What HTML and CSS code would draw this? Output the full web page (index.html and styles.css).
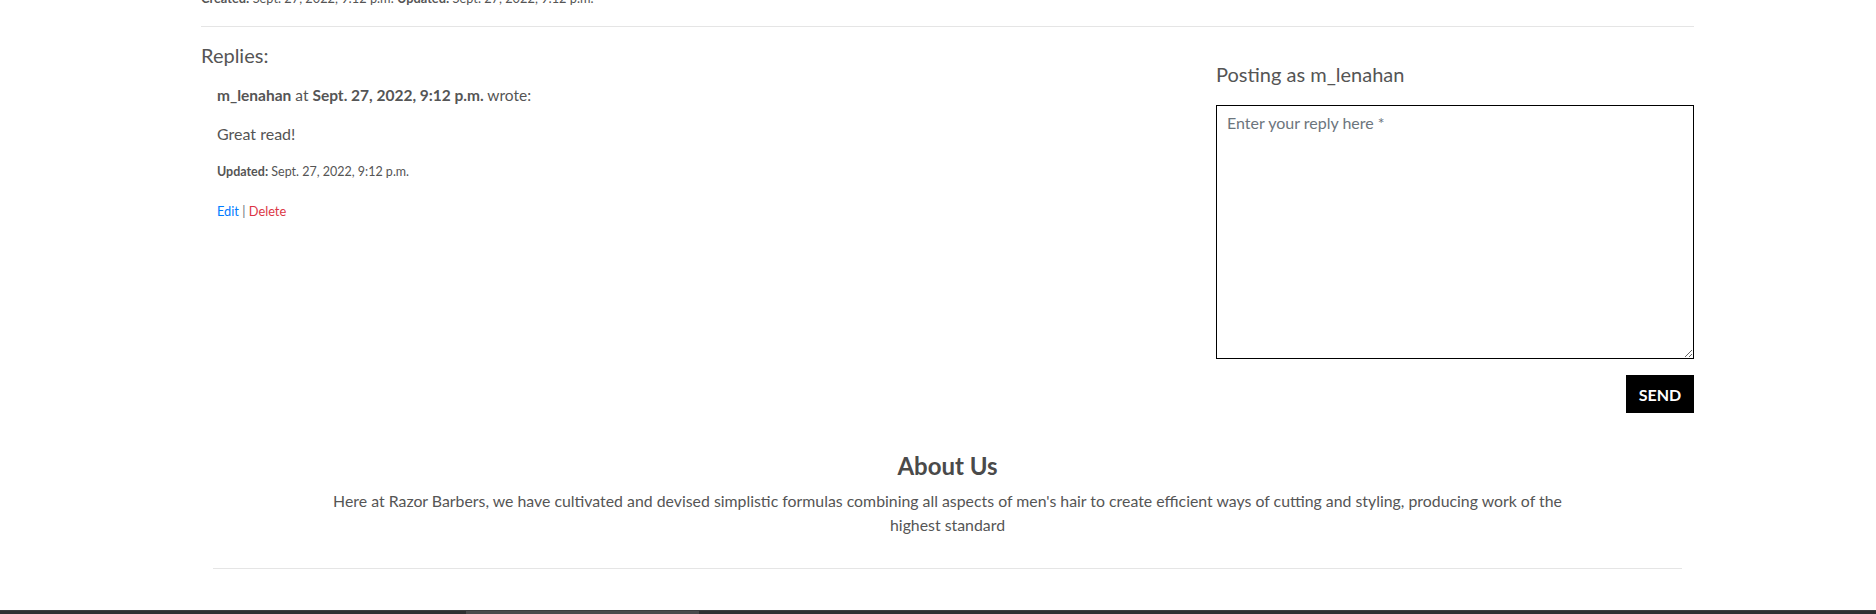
FILE: index.html
```html
<!DOCTYPE html>
<html lang="en">
<head>
<meta charset="utf-8">
<title>Post replies</title>
<link rel="stylesheet" href="styles.css">
</head>
<body>
<main class="page">
  <p class="post-meta"><strong>Created:</strong> Sept. 27, 2022, 9:12 p.m. <strong>Updated:</strong> Sept. 27, 2022, 9:12 p.m.</p>
  <hr class="rule">
  <div class="comments-row">
    <section class="replies">
      <h4 class="replies-title">Replies:</h4>
      <article class="reply">
        <p class="reply-head"><strong>m_lenahan</strong> at <strong>Sept. 27, 2022, 9:12 p.m.</strong> wrote:</p>
        <p class="reply-body">Great read!</p>
        <p class="reply-meta"><strong>Updated:</strong> Sept. 27, 2022, 9:12 p.m.</p>
        <p class="reply-actions"><a class="edit" href="#">Edit</a> <span class="sep">|</span> <a class="delete" href="#">Delete</a></p>
      </article>
    </section>
    <section class="reply-form">
      <h4 class="posting-as">Posting as m_lenahan</h4>
      <textarea class="reply-input" placeholder="Enter your reply here *"></textarea>
      <div class="form-actions">
        <button class="send-btn" type="button">SEND</button>
      </div>
    </section>
  </div>
  <section class="about">
    <h3 class="about-title">About Us</h3>
    <p class="about-text">Here at Razor Barbers, we have cultivated and devised simplistic formulas combining all aspects of men's hair to create efficient ways of cutting and styling, producing work of the highest standard</p>
    <hr class="about-rule">
  </section>
</main>
<div class="footer-strip"><div class="footer-thumb"></div></div>
</body>
</html>
```

FILE: styles.css
```css
html, body {
  margin: 0;
  padding: 0;
  overflow: hidden;
}
body {
  font-family: Lato, "Open Sans", "Liberation Sans", sans-serif;
  font-size: 16px;
  line-height: 1.5;
  color: #555;
  background: #fff;
  height: 614px;
  display: flex;
  flex-direction: column;
}
.page {
  width: 1493px;
  margin-left: 201px;
  flex: 1;
}
.post-meta {
  font-size: 12.8px;
  margin: -11px 0 18px;
}
.rule {
  margin: 0;
  border: 0;
  border-top: 1px solid rgba(0, 0, 0, 0.1);
}
.comments-row {
  display: grid;
  grid-template-columns: 1fr 478px;
  column-gap: 30px;
}
.replies-title {
  font-size: 20px;
  font-weight: 400;
  line-height: 1.2;
  margin: 16px 0 0;
}
.reply {
  padding-left: 16px;
}
.reply-head {
  font-size: 15.5px;
  line-height: 24px;
  margin: 16px 0 0;
}
.reply-body {
  margin: 15px 0 0;
}
.reply-meta {
  font-size: 12.5px;
  margin: 17px 0 0;
}
.reply-actions {
  font-size: 12.8px;
  margin: 20px 0 0;
}
.reply-actions a { text-decoration: none; }
.edit { color: #007bff; }
.delete { color: #dc3545; }
.sep { color: #6c757d; }
.reply-form {
  display: flex;
  flex-direction: column;
}
.posting-as {
  font-size: 20px;
  font-weight: 400;
  line-height: 1.2;
  margin: 35px 0 0;
}
.reply-input {
  margin-top: 19px;
  height: 254px;
  box-sizing: border-box;
  border: 1px solid #000;
  border-radius: 0;
  padding: 5px 10px;
  font-family: Lato, "Open Sans", sans-serif;
  font-size: 16px;
  line-height: 1.5;
  color: #495057;
}
.reply-input::placeholder {
  color: #6c757d;
}
.form-actions {
  display: flex;
  justify-content: flex-end;
  margin-top: 16px;
}
.send-btn {
  width: 68px;
  height: 38px;
  border: 0;
  border-radius: 0;
  background: #000;
  color: #fff;
  font-family: Lato, "Open Sans", sans-serif;
  font-weight: 700;
  font-size: 16px;
  padding: 0;
}
.about {
  text-align: center;
}
.about-title {
  font-size: 24px;
  font-weight: 700;
  line-height: 1.2;
  color: #4a4a4a;
  margin: 39px 0 0;
}
.about-text {
  width: 1260px;
  font-size: 15.85px;
  line-height: 24px;
  margin: 8px auto 0;
}
.about-rule {
  margin: 31px 12px 0;
  border: 0;
  border-top: 1px solid rgba(0, 0, 0, 0.1);
}
.footer-strip {
  height: 4px;
  background: #2f2f31;
  border-top: 1px solid #3c3c3e;
  box-sizing: border-box;
  position: relative;
}
.footer-thumb {
  position: absolute;
  left: 466px;
  width: 233px;
  top: 0;
  bottom: 0;
  background: #4a4a4c;
}
```
